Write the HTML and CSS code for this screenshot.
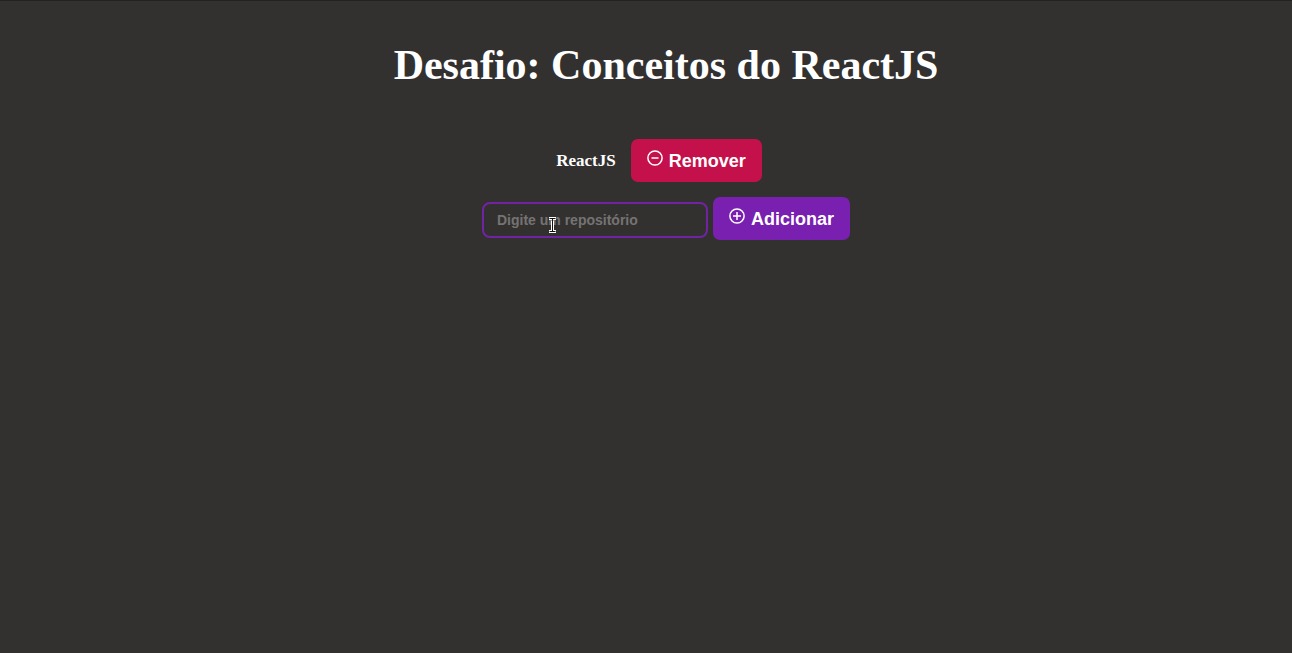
FILE: index.html
```html
<!DOCTYPE html>
<html lang="pt-BR">
<head>
  <meta charset="utf-8">
  <title>Desafio: Conceitos do ReactJS</title>
  <link rel="stylesheet" href="styles.css">
</head>
<body>
  <main class="page">
    <h1 class="title">Desafio: Conceitos do ReactJS</h1>
    <ul class="repositories">
      <li class="repository">
        <span class="repository-name">ReactJS</span>
        <button class="button button-remove" type="button">
          <svg class="icon" viewBox="0 0 16 16" aria-hidden="true"><circle cx="8" cy="8" r="7.1"/><path d="M4.5 8h7"/></svg>
          Remover
        </button>
      </li>
    </ul>
    <form class="add-form">
      <div class="field">
        <input class="input" type="text" placeholder="Digite um repositório" aria-label="Digite um repositório">
        <svg class="cursor" viewBox="0 0 9 18" aria-hidden="true">
          <path class="cursor-edge" d="M1 2.5h2.5l1 1 1-1H8M1 15.5h2.5l1-1 1 1H8M4.5 3v12"/>
          <path class="cursor-core" d="M1.5 2.5h6M1.5 15.5h6M4.5 2.5v13"/>
        </svg>
      </div>
      <button class="button button-add" type="button">
        <svg class="icon" viewBox="0 0 16 16" aria-hidden="true"><circle cx="8" cy="8" r="7.1"/><path d="M4 8h8M8 4v8"/></svg>
        Adicionar
      </button>
    </form>
  </main>
</body>
</html>
```
FILE: styles.css
```css
* {
  box-sizing: border-box;
}

body {
  margin: 0;
  min-height: 100vh;
  background: #33312f;
  color: #fff;
  border-top: 1px solid #232221;
  font-family: "Liberation Serif", "Times New Roman", serif;
}

.page {
  display: flex;
  flex-direction: column;
  align-items: center;
  padding: 40px 0 0 40px;
}

.title {
  margin: 0;
  font-size: 42px;
  line-height: 48px;
}

.repositories {
  list-style: none;
  margin: 50px 0 15px;
  padding: 0;
}

.repository {
  display: flex;
  align-items: center;
  gap: 15px;
  padding-right: 14px;
}

.repository-name {
  font-size: 17px;
  font-weight: bold;
}

.button {
  display: flex;
  align-items: center;
  gap: 6px;
  height: 43px;
  padding: 2px 16px 0;
  border: 0;
  border-radius: 7px;
  color: #fff;
  font: bold 18px "Liberation Sans", Arial, sans-serif;
}

.button-remove {
  background: #c5114b;
}

.button-add {
  background: #7920b1;
}

.icon {
  width: 16px;
  height: 16px;
  margin-bottom: 7px;
  fill: none;
  stroke: currentColor;
  stroke-width: 1.5;
}

.add-form {
  display: flex;
  align-items: center;
  gap: 5px;
}

.field {
  position: relative;
  display: flex;
  padding-top: 3px;
}

.input {
  width: 226px;
  height: 36px;
  padding: 0 13px;
  border: 2px solid #7223a5;
  border-radius: 8px;
  background: transparent;
  color: #fff;
  font: bold 14px "Liberation Sans", Arial, sans-serif;
}

.input::placeholder {
  color: #757373;
}

.cursor {
  position: absolute;
  left: 66px;
  top: 17px;
  width: 9px;
  height: 18px;
  fill: none;
}

.cursor-edge {
  stroke: #fff;
  stroke-width: 3;
}

.cursor-core {
  stroke: #111;
  stroke-width: 1;
}
```
